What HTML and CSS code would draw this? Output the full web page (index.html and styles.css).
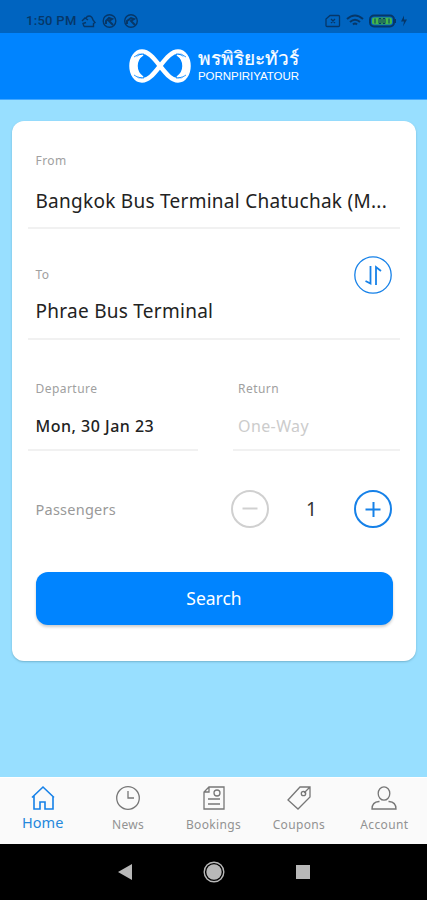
FILE: index.html
```html
<!DOCTYPE html>
<html lang="en">
<head>
<meta charset="utf-8">
<meta name="viewport" content="width=device-width, initial-scale=1">
<title>Pornpiriya Tour</title>
<link rel="stylesheet" href="styles.css">
</head>
<body>
<div class="status">
  <span class="clock">1:50 PM</span>
  <svg class="status-left" width="58" height="16" viewBox="0 0 58 16" fill="none" stroke="currentColor" stroke-width="1.4">
    <path d="M3 13.500h9.500v-3l1.500-1-2-2.500q-1-4-4-4-2 0-3 2M1 8l3-3 3 2M3 13.500l-1-3 3-1"/>
    <circle cx="28.500" cy="8" r="6.300"/><path d="M25 11V8l3-3 3 1-3 2 4 4" stroke-width="2"/>
    <circle cx="50" cy="8" r="6.300"/><path d="M46 11V8l4-3 3 1-3 2 4 4" stroke-width="2"/>
  </svg>
  <svg class="status-right" width="84" height="14" viewBox="0 0 84 14" fill="none" stroke="currentColor" stroke-width="1.300">
    <path d="M5 1.500h8.500q1 0 1 1v9q0 1-1 1H2q-1 0-1-1V5zM6 5l4 4M10 5l-4 4"/>
    <path d="M22 5q8-7 16 0M25 8q5-4.500 10 0M28 10.500q2-2 4 0" stroke-width="2"/>
    <rect x="45" y="1.500" width="24" height="11" rx="4" stroke-width="2"/>
    <rect x="47" y="3.500" width="20" height="7" rx="2" fill="#43b649" stroke="none"/>
    <path d="M50 4.500v5M54 4.500h2v5h-2zM58 4.500h2v5h-2zM64 4.500v5" stroke-width="1"/>
    <path d="M70 5v4" stroke-width="2"/>
    <path d="M79 1.500l-3 6h3l-1 5 4-7h-3z" fill="currentColor" stroke="none"/>
  </svg>
</div>
<header class="brand">
  <svg class="mark" width="62" height="36" viewBox="0 0 62 36" fill="none" stroke="#fff">
    <path d="M31 18C24 9 19 3.500 13 3.500 7 3.500 2.500 10 2.500 18S7 32.500 13 32.500 24 27 31 18 43 3.500 49 3.500 59.500 10 59.500 18 55 32.500 49 32.500 38 27 31 18Z" stroke-width="4.500"/>
    <path d="M14 7Q5 8 4 18t10 11q-6-4-6-11t6-11ZM48 7q9 1 10 11t-10 11q6-4 6-11t-6-11Z" fill="#fff" stroke-width="1.500"/>
    <path d="M5 9q4-4 10-3M5 27q4 4 10 3M57 9q-4-4-10-3M57 27q-4 4-10 3" stroke="#0084ff" stroke-width=".8"/>
  </svg>
  <div class="name"><span class="thai">พรพิริยะทัวร์</span><span class="latin">PORNPIRIYATOUR</span></div>
</header>
<main>
  <section class="card">
    <div class="field from">
      <div class="label">From</div>
      <div class="value">Bangkok Bus Terminal Chatuchak (M...</div>
    </div>
    <div class="field to">
      <div class="label">To</div>
      <div class="value">Phrae Bus Terminal</div>
      <button class="round swap" aria-label="Swap"><svg width="38" height="38" viewBox="0 0 38 38" fill="none" stroke="currentColor" stroke-width="1.800"><circle cx="19" cy="19" r="18.200" stroke-width="1.300"/><path d="M16.500 10v17.500L11.500 25M22 29V11l5 4"/></svg></button>
    </div>
    <div class="dates">
      <div class="field"><div class="label">Departure</div><div class="date">Mon, 30 Jan 23</div></div>
      <div class="field"><div class="label">Return</div><div class="date none">One-Way</div></div>
    </div>
    <div class="passengers">
      <span class="plabel">Passengers</span>
      <button class="round minus" aria-label="Fewer"><svg width="38" height="38" viewBox="0 0 38 38" fill="none" stroke="currentColor" stroke-width="2"><circle cx="19" cy="19" r="18"/><path d="M11.500 18.500h15"/></svg></button>
      <span class="count">1</span>
      <button class="round" aria-label="More"><svg width="38" height="38" viewBox="0 0 38 38" fill="none" stroke="currentColor" stroke-width="2"><circle cx="19" cy="19" r="18"/><path d="M11.500 19.500h15M19.500 12v15"/></svg></button>
    </div>
    <button class="search">Search</button>
  </section>
</main>
<nav class="tabs">
  <a class="tab active"><svg width="26" height="26" viewBox="0 0 26 26"><path d="M2 12.500L13 2l11 10.500M4 11v13h6v-7h5v7h8V11"/></svg><span>Home</span></a>
  <a class="tab"><svg width="26" height="26" viewBox="0 0 26 26"><circle cx="13" cy="13" r="11.300"/><path d="M13 6v7h6"/></svg><span>News</span></a>
  <a class="tab"><svg width="26" height="26" viewBox="0 0 26 26"><path d="M8 2h15v22H3V7zM8 2v5H3M7 14h12M7 19h12"/><circle cx="16" cy="8" r="3"/></svg><span>Bookings</span></a>
  <a class="tab"><svg width="26" height="26" viewBox="0 0 26 26"><path d="M2 15L14 2h10v10L12 24zM24 2l-6 6"/><circle cx="17.500" cy="8.500" r="2.200"/></svg><span>Coupons</span></a>
  <a class="tab"><svg width="26" height="26" viewBox="0 0 26 26"><ellipse cx="13" cy="8.500" rx="5.800" ry="6.700"/><path d="M8.500 16.500H8Q1 17 1 24h24q0-7-7-7.500h-.500"/></svg><span>Account</span></a>
</nav>
<div class="system">
  <svg width="16" height="18" viewBox="0 0 16 18"><path d="M15 1v16L1 9z" fill="#b8b8b8"/></svg>
  <svg width="22" height="22" viewBox="0 0 22 22"><circle cx="11" cy="11" r="9.800" fill="none" stroke="#b8b8b8" stroke-width="1.400"/><circle cx="11" cy="11" r="7.700" fill="#b8b8b8"/></svg>
  <svg width="16" height="16" viewBox="0 0 16 16"><path d="M1 1h14v14H1z" fill="#b8b8b8"/></svg>
</div>
</body>
</html>
```
FILE: styles.css
```css
* { box-sizing: border-box; }
body { margin: 0; height: 900px; display: flex; flex-direction: column; background: #98dfff; font-family: "Noto Sans", sans-serif; overflow: hidden; }
button { border: 0; padding: 0; background: none; font: inherit; }
svg { display: block; flex: none; }
.status { height: 33px; background: #0064c0; color: #063768; display: flex; align-items: center; padding: 9px 18px 0 26px; }
.clock { font: 500 13px/16px Roboto, sans-serif; width: 50px; letter-spacing: .3px; white-space: nowrap; }
.status-left { margin-left: 5px; }
.status-right { margin-left: auto; }
.brand { height: 67px; background: #0084ff; border-bottom: 1px solid #42a7ff; display: flex; justify-content: center; color: #fff; padding-top: 15px; gap: 7px; }
.mark { margin-left: 2px; }
.name { display: flex; flex-direction: column; width: 102px; white-space: nowrap; }
.thai { font-size: 19px; line-height: 21px; height: 22px; -webkit-text-stroke: .2px #fff; }
.latin { font: 11.5px/13px "Liberation Sans", sans-serif; letter-spacing: -.05px; }
main { flex: 1; padding: 21px 11px 0 12px; }
.card { height: 540px; background: #fff; border-radius: 12px; box-shadow: 0 1px 2px #4b89a080; padding: 0 16px; }
.field { position: relative; border-bottom: 2px solid #f1f1f1; padding-left: 7.5px; }
.label { font-size: 12px; line-height: 16px; color: #a0a0a0; letter-spacing: .45px; }
.value { font-size: 19px; line-height: 26px; color: #222; white-space: nowrap; letter-spacing: .27px; }
.from { height: 108px; padding-top: 32px; }
.from .value { margin-top: 19px; }
.to { height: 111px; padding-top: 38px; }
.to .value { margin-top: 16px; line-height: 25px; }
.round { width: 38px; height: 38px; color: #1681e8; }
.swap { position: absolute; right: 8px; top: 27px; }
.dates { display: grid; grid-template-columns: 170px 167px; justify-content: space-between; }
.dates .field { height: 111px; padding-top: 41px; }
.dates .field + .field { padding-left: 5px; }
.date { font-size: 16px; line-height: 22px; color: #222; font-weight: 500; margin-top: 18px; letter-spacing: .5px; white-space: nowrap; }
.date.none { color: #ccc; font-weight: 400; letter-spacing: .4px; }
.passengers { height: 116px; display: flex; align-items: center; padding: 0 8px 0 7.5px; }
.plabel { font-size: 14.5px; color: #999; width: 195.5px; letter-spacing: .25px; }
.minus { color: #d0d0d0; }
.count { flex: 1; text-align: center; font-size: 19px; color: #333; }
.search { display: block; width: 357px; height: 53px; margin: 5px 0 0 7.5px; border-radius: 12px; background: #0084ff; color: #fff; font-size: 17.5px; padding-bottom: 2px; box-shadow: 0 2px 3px #0003; }
.tabs { height: 67px; background: #fafafa; display: flex; border-top: 1px solid #fff; }
.tab { flex: 1; display: flex; flex-direction: column; align-items: center; padding-top: 7px; color: #929292; font-size: 12px; line-height: 20px; letter-spacing: .35px; }
.tab svg { fill: none; stroke: #777; stroke-width: 1.3; }
.tab span { margin-top: 4px; }
.tab.active { color: #2588dc; font-size: 14.5px; letter-spacing: .1px; }
.tab.active svg { stroke: #1681e8; stroke-width: 1.6; }
.tab.active span { margin-top: 1px; }
.system { height: 56px; background: #000; display: flex; justify-content: center; align-items: center; gap: 70px; }
```
